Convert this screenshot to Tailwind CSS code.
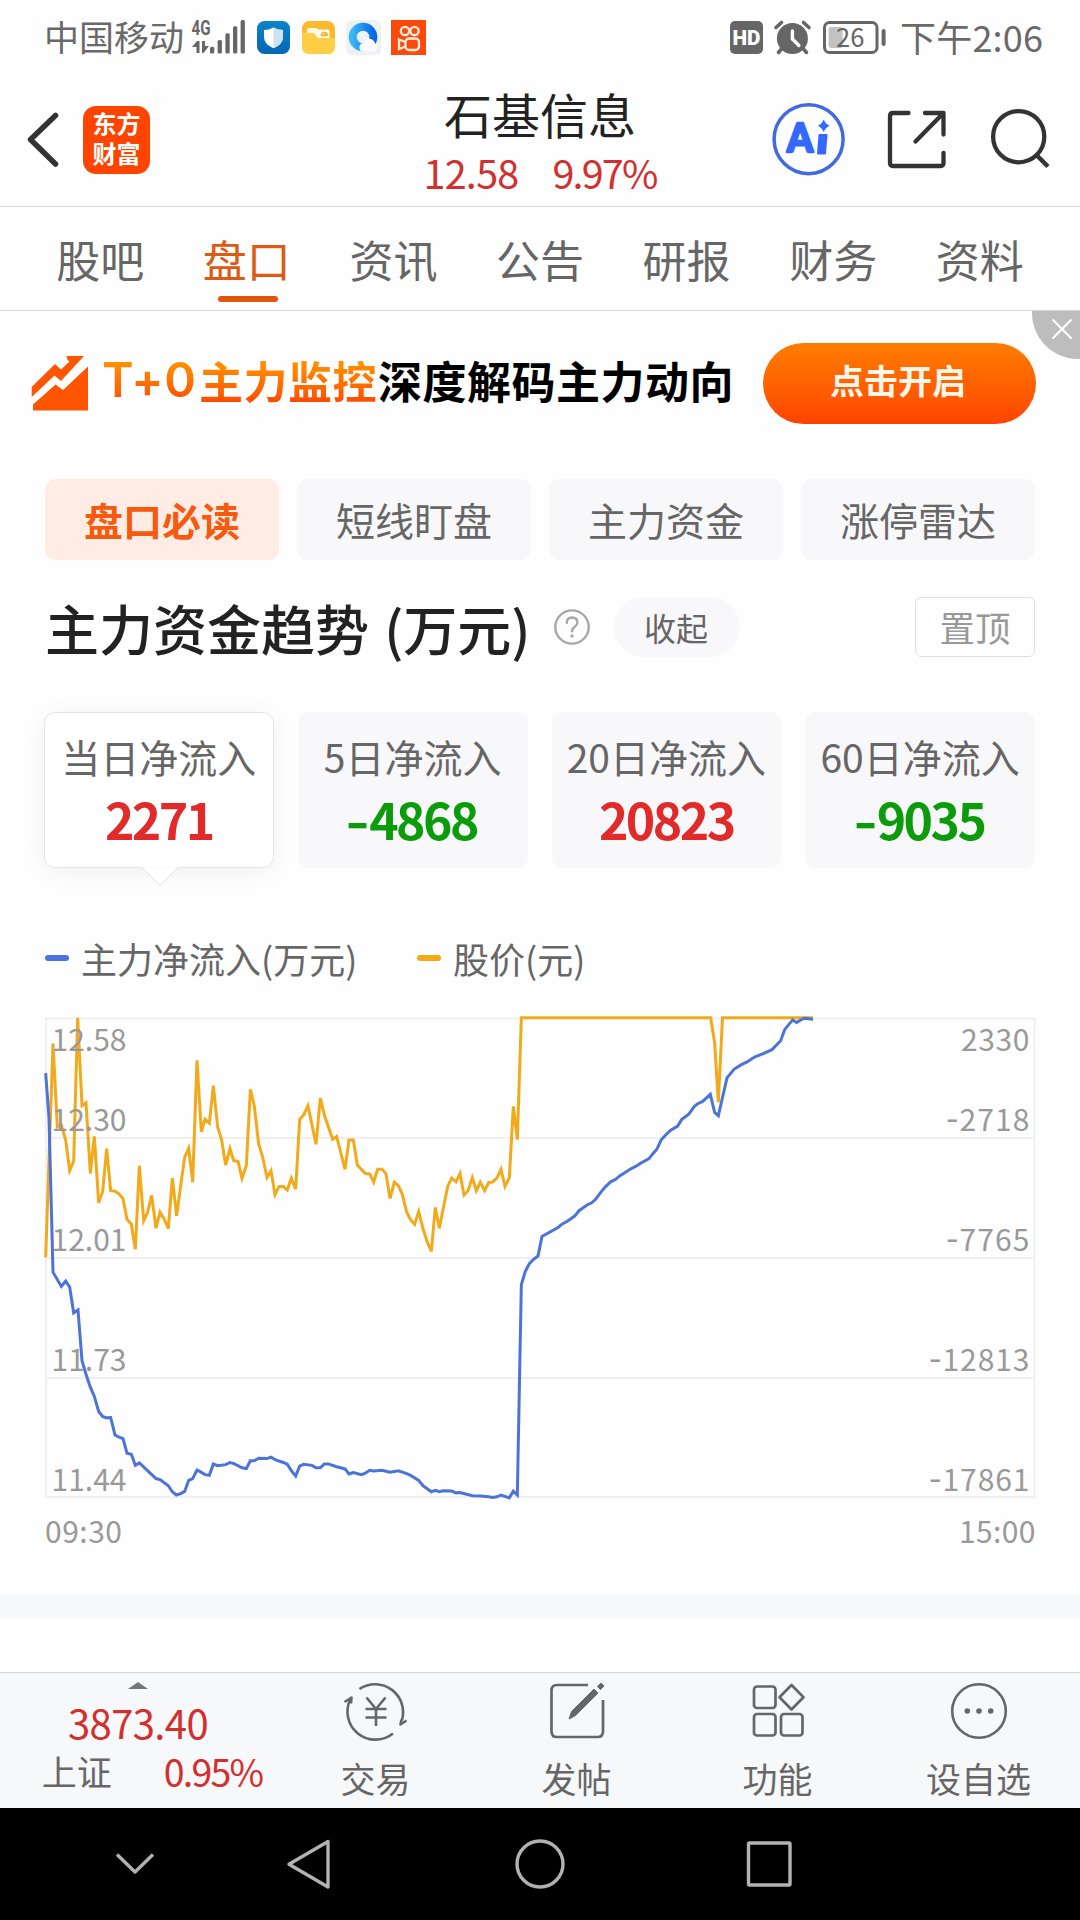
<!DOCTYPE html>
<html lang="zh-CN">
<head>
<meta charset="utf-8">
<title>石基信息 盘口</title>
<script src="https://cdn.jsdelivr.net/npm/@tailwindcss/browser@4"></script>
</head>
<body class="w-[1080px] h-[1920px] overflow-hidden bg-[#fefefe] font-['Noto_Sans_CJK_SC',sans-serif] text-[#666] flex flex-col leading-none whitespace-nowrap">

<!-- status bar -->
<div class="h-[74px] shrink-0 flex items-center pl-[44px] pr-[36px] text-[#696969]">
  <span class="text-[35px] leading-[68px] mb-[2px] w-[148px]">中国移动</span>
  <svg class="w-[53px] h-[36px] overflow-visible" viewBox="192 18 53 36" fill="#666">
    <text x="191.5" y="34" font-family="Roboto" font-weight="700" font-size="20" textLength="19" lengthAdjust="spacingAndGlyphs">4G</text>
    <path d="M192 46l5-6h2.500V52h-3v-6zM202 40h3v5h4l-5.500 7H202z"/>
    <rect x="210" y="45.700" width="4.300" height="6.800" rx="1.500"/><rect x="217.600" y="39" width="4.300" height="13.500" rx="1.500"/><rect x="225.400" y="32.300" width="4.300" height="20.200" rx="1.500"/><rect x="233" y="25.300" width="4.300" height="27.200" rx="1.500"/><rect x="240.600" y="19" width="4.300" height="33.500" rx="1.500"/>
  </svg>
  <svg class="w-[33px] h-[33px] ml-[12px]" viewBox="0 0 33 33">
    <defs><linearGradient id="sh" x2="0" y2="1"><stop stop-color="#0a84c8"/><stop offset="1" stop-color="#0567b4"/></linearGradient></defs>
    <rect width="33" height="33" rx="7.500" fill="url(#sh)"/>
    <path d="M16.500 6.500q4.500 2.500 9.500 2.500v8q-1 7-9.500 10.200Q8 24 7 17V9q5 0 9.500-2.500z" fill="#fff"/><path d="M16.500 6.500q4.500 2.500 9.500 2.500v8q-1 7-9.500 10.200z" fill="#cfe2f1"/>
  </svg>
  <svg class="w-[33px] h-[33px] ml-[12px]" viewBox="0 0 33 33">
    <rect width="33" height="33" rx="7.500" fill="#fdb92c"/>
    <path d="M5 14V9q0-2 2-2h7l2 1.500h9.500q2 0 2 2V17H5z" fill="#fffbe9"/>
    <path d="M0 12h11q2 0 3 2.500t3 2.500h16v9q0 7-7.500 7h-18Q0 33 0 26z" fill="#fecf45"/>
    <path d="M19.500 14.500a3 3 0 0 1 6 0zM22.500 14l1.500-2" fill="none" stroke="#f3b32c" stroke-width="1.400"/>
  </svg>
  <svg class="w-[35px] h-[35px] ml-[11px]" viewBox="0 0 35 35">
    <defs><linearGradient id="qb" x2="1" y2="0"><stop stop-color="#39b6f4"/><stop offset="1" stop-color="#0a68e8"/></linearGradient></defs>
    <rect width="35" height="35" rx="6" fill="#eef1f6"/>
    <circle cx="17" cy="17" r="10.300" fill="none" stroke="url(#qb)" stroke-width="8"/>
    <path d="M16 31.500a4.500 4.500 0 0 1 1-8.500 6 6 0 0 1 8-4 6 6 0 0 1 4 4.500 4.300 4.300 0 0 1-1 8z" fill="#fbfcfe"/>
  </svg>
  <svg class="w-[35px] h-[35px] ml-[10px]" viewBox="0 0 35 35" fill="none" stroke="#ffeede" stroke-width="2.300">
    <rect width="35" height="35" fill="#fd4a0c" stroke="none"/>
    <circle cx="14" cy="11" r="4.200"/><circle cx="23.500" cy="11" r="4.200"/>
    <rect x="14.500" y="18.500" width="13.500" height="11.500" rx="3.500"/><path d="M14.500 22L8 19.500v9.500l6.500-2.500"/>
  </svg>
  <div class="ml-auto flex items-center">
    <svg class="w-[156px] h-[36px] overflow-visible" viewBox="730 18 156 36">
      <rect x="730" y="20" width="33" height="33" rx="5" fill="#666"/>
      <text x="732.500" y="44" font-family="Roboto" font-weight="900" font-size="20.500" fill="#fff" textLength="28" lengthAdjust="spacingAndGlyphs">HD</text>
      <circle cx="792.400" cy="37.500" r="15.500" fill="#666"/>
      <path d="M776 26.500l5.500-5M809 26.500l-5.500-5M781.500 48l-3 3.500M803.500 48l3 3.500" stroke="#666" stroke-width="3.600" stroke-linecap="round"/>
      <path d="M792.400 30v8l6.500 6.500" fill="none" stroke="#fff" stroke-width="3.400" stroke-linecap="round"/>
      <rect x="824.500" y="21.500" width="52.500" height="30" rx="5" fill="none" stroke="#666" stroke-width="3"/>
      <rect x="828.600" y="26" width="14" height="21" rx="2.500" fill="#c2c2c2"/>
      <rect x="881.600" y="28" width="4" height="17" rx="2" fill="#666"/>
      <text x="836" y="46" font-size="25.500" fill="#666">26</text>
    </svg>
    <span class="text-[36px] leading-[68px] mb-[3px] ml-[14px] w-[144px] tracking-[0.200px]">下午2:06</span>
  </div>
</div>

<!-- title bar -->
<header class="h-[133px] shrink-0 border-b border-[#d6d6d6] flex items-start relative">
  <svg class="w-[36px] h-[60px] ml-[25px] mt-[36px]" viewBox="25 110 36 60" fill="none" stroke="#333" stroke-width="5.500" stroke-linecap="round" stroke-linejoin="round"><path d="M55.500 115.500L30.500 139.500l25 24.500"/></svg>
  <div class="w-[67px] h-[68px] ml-[22px] mt-[32px] rounded-[13px] bg-[#ff4400] text-white text-[24px] font-bold text-center leading-[29.500px] pt-[2px]">东方<br>财富</div>
  <div class="absolute left-[340px] w-[400px] top-0 flex flex-col items-center">
    <h1 class="text-[48px] leading-[58px] mt-[10px] text-[#222] font-normal">石基信息</h1>
    <div class="flex text-[#d22f2f] text-[39.500px] leading-[50px] mt-[5px]"><span class="w-[129px] tracking-[-0.700px]">12.58</span><span class="tracking-[-1.800px]">9.97%</span></div>
  </div>
  <svg class="w-[290px] h-[80px] ml-auto mr-[20px] mt-[26px]" viewBox="770 100 290 80" fill="none" stroke="#333" stroke-width="4.300" stroke-linecap="round" stroke-linejoin="round">
    <circle cx="808.600" cy="139.200" r="34.500" stroke="#4169e1" stroke-width="3.500"/>
    <text x="787" y="152" font-family="Lato" font-weight="900" font-size="40" fill="#3568ff" stroke="#3568ff" stroke-width="2.500" textLength="26" lengthAdjust="spacingAndGlyphs">A</text>
    <path d="M819.500 135h7l-1.500 18.500h-7z" fill="#3568ff" stroke="#3568ff" stroke-width="2"/>
    <path d="M823.700 119.500q1.800 4.400 6 6.200-4.200 1.800-6 6.200-1.800-4.400-6-6.200 4.200-1.800 6-6.200z" fill="#3568ff" stroke="none"/>
    <path d="M908.500 113H893q-3 0-3 3v47q0 3 3 3h47.500q3 0 3-3v-10M925 113h18.500v21.500M915.500 141.500L942.500 114"/>
    <circle cx="1018.700" cy="136.700" r="25.600"/><path d="M1037.500 156l10.500 10.500" stroke-linecap="butt" stroke-width="4.500"/>
  </svg>
</header>

<!-- tabs -->
<nav class="h-[104px] shrink-0 border-b border-[#d6d6d6] px-[27px] flex text-[44px] leading-[104px] text-center">
  <span class="flex-1">股吧</span>
  <span class="flex-1 relative text-[#dd5a14]">盘口<i class="absolute left-[44px] top-[89px] w-[60px] h-[6px] rounded-full bg-[#e3560e]"></i></span>
  <span class="flex-1">资讯</span><span class="flex-1">公告</span><span class="flex-1">研报</span><span class="flex-1">财务</span><span class="flex-1">资料</span>
</nav>

<!-- promotion -->
<section class="h-[168px] shrink-0 flex items-start relative">
  <svg class="w-[58px] h-[56px] ml-[31px] mt-[44px]" viewBox="31 355 58 56" fill="#ff5500"><path d="M31.700 387L55 364l6 5.500 8.500-8q-2.500-1-3-5.500H84l-23 25-6.500-5.500-22.800 21.500zM33 404.500L55.500 384.500l7.500 5.500L88 366.500v44H33z"/></svg>
  <div class="ml-[13px] mt-[37px] text-[44px] leading-[64px] font-bold tracking-[0.500px] flex"><span class="bg-linear-to-b from-[#ff9300] from-20% to-[#ff4a00] to-85% bg-clip-text text-transparent font-['Inter'] font-semibold text-[48px] tracking-[0.500px] w-[97px]">T+0</span><span class="bg-linear-to-b from-[#ff9300] from-20% to-[#ff4a00] to-85% bg-clip-text text-transparent">主力监控</span><span class="text-black ml-px">深度解码主力动向</span></div>
  <button class="absolute left-[763px] top-[32px] w-[273px] h-[81px] rounded-full bg-linear-to-b from-[#ff7c00] to-[#ff4200] text-[#fff6ea] text-[34px] font-bold leading-[72px] pb-[7px] pr-[3px]">点击开启</button>
  <div class="absolute right-0 top-0 w-[48px] h-[48px] rounded-bl-[46px] bg-[#bdbdbd]">
    <svg class="w-[20px] h-[20px] ml-[20px] mt-[8px]" viewBox="0 0 20 20" stroke="#fff" stroke-width="2.200"><path d="M0.500 0.500l19 19M19.500 0.500l-19 19"/></svg>
  </div>
</section>

<!-- chips -->
<div class="h-[81px] shrink-0 mx-[45px] grid grid-cols-4 gap-[18px] text-[39px] leading-[81px] text-center">
  <span class="rounded-[11px] bg-[#ffede5] text-[#f65a0f] font-bold">盘口必读</span>
  <span class="rounded-[11px] bg-[#f8f8fa]">短线盯盘</span>
  <span class="rounded-[11px] bg-[#f8f8fa]">主力资金</span>
  <span class="rounded-[11px] bg-[#f8f8fa]">涨停雷达</span>
</div>

<!-- section heading -->
<div class="h-[60px] shrink-0 mt-[37px] mx-[45px] flex items-center">
  <h2 class="text-[54px] leading-[60px] pt-[2px] font-medium text-[#222] w-[509px] [word-spacing:3px]">主力资金趋势 (万元)</h2>
  <svg class="w-[36px] h-[36px] shrink-0" viewBox="0 0 36 36" fill="none" stroke="#a6a6a6" stroke-width="2.300"><circle cx="18" cy="18" r="16.700"/><path d="M12.800 14q0-5.500 5.300-5.500t5.300 5q0 2.500-2.700 4.300T18 22.500" stroke-linecap="round"/><circle cx="18" cy="27" r="1" fill="#a6a6a6" stroke-width="1.500"/></svg>
  <span class="ml-[24px] w-[126px] h-[60px] rounded-full bg-[#f8f8fa] text-[32px] leading-[60px] pr-[2px] text-center">收起</span>
  <span class="ml-auto w-[120px] h-[60px] rounded-[6px] border border-[#e0e0e0] text-[#999] text-[35.500px] leading-[58px] text-center">置顶</span>
</div>

<!-- inflow cards -->
<div class="h-[156px] shrink-0 mt-[55px] ml-[44px] mr-[45px] grid grid-cols-4 gap-6 text-center text-[39px]">
  <div class="relative rounded-[11px] bg-white border border-[#e6e6e6] shadow-[0_4px_26px_rgba(0,0,0,0.06)]">
    <div class="leading-[48px] mt-[19px]">当日净流入</div>
    <div class="text-[50px] leading-[60px] mt-[8px] font-bold tracking-[-2.500px] text-[#e12a2a]">2271</div>
    <svg class="absolute left-[96px] top-[153px] w-[38px] h-[20px]" viewBox="0 0 38 20"><path d="M1 1.500L19 19.500 37 1.500" fill="#fff" stroke="#e2e2e2"/><path d="M1 0h36v1.500H1z" fill="#fff"/></svg>
  </div>
  <div class="rounded-[11px] bg-[#f8f8fa]">
    <div class="leading-[48px] mt-[20px]">5日净流入</div>
    <div class="text-[50px] leading-[60px] mt-[8px] font-bold tracking-[-2.500px] text-[#0b9b0b]"><span class="inline-block scale-x-130 mr-[5px]">-</span>4868</div>
  </div>
  <div class="rounded-[11px] bg-[#f8f8fa]">
    <div class="leading-[48px] mt-[20px]">20日净流入</div>
    <div class="text-[50px] leading-[60px] mt-[8px] font-bold tracking-[-2.500px] text-[#e12a2a]">20823</div>
  </div>
  <div class="rounded-[11px] bg-[#f8f8fa]">
    <div class="leading-[48px] mt-[20px]">60日净流入</div>
    <div class="text-[50px] leading-[60px] mt-[8px] font-bold tracking-[-2.500px] text-[#0b9b0b]"><span class="inline-block scale-x-130 mr-[5px]">-</span>9035</div>
  </div>
</div>

<!-- legend -->
<div class="h-[50px] shrink-0 mt-[65px] mx-[45px] flex items-center text-[36px] leading-[50px]">
  <i class="w-[24px] h-[6px] rounded-full bg-[#4a72e0]"></i><span class="ml-[12px] w-[336px]">主力净流入(万元)</span>
  <i class="w-[24px] h-[6px] rounded-full bg-[#f5aa17]"></i><span class="ml-[12px]">股价(元)</span>
</div>

<!-- trend chart -->
<div class="h-[567px] shrink-0 mt-[27px]">
  <svg class="w-[1080px] h-[567px]" viewBox="0 1010 1080 567">
    <path d="M46 1018.500H1034.500V1497H46zM46 1138H1034M46 1258H1034M46 1378H1034" fill="none" stroke="#f0f0f0" stroke-width="2"/>
    <g transform="translate(30 1000) scale(.33333 .35714)" fill="none" stroke-width="3">
      <polyline vector-effect="non-scaling-stroke" stroke="#f2aa1c" points="47,721 58,420 69,122 82,355 94,350 107,392 119,478 131,452 143,50 156,296 168,288 181,486 193,382 206,568 218,536 230,416 242,534 254,535 267,543 279,556 291,614 304,628 316,698 328,464 341,618 353,594 365,547 378,639 390,594 403,614 415,640 427,499 440,604 452,520 464,440 476,415 488,510 501,169 514,369 525,334 538,345 550,240 563,356 575,392 587,462 600,416 611,450 624,452 636,500 649,464 661,250 673,297 686,404 698,440 711,497 723,478 735,545 747,522 760,522 772,532 784,499 797,530 809,334 821,322 834,296 846,350 858,404 871,275 883,322 908,390 920,382 945,474 957,392 970,392 982,462 1006,486 1019,487 1031,510 1043,474 1056,474 1068,486 1080,556 1093,510 1105,520 1117,544 1130,594 1142,616 1154,628 1166,592 1179,640 1191,676 1204,704 1216,581 1228,639 1253,522 1265,499 1278,509 1290,486 1302,546 1314,534 1327,497 1339,534 1351,510 1364,534 1376,511 1388,510 1401,498 1413,474 1425,522 1438,498 1450,298 1462,391 1474,50 2042,50 2054,120 2065,286 2077.500,50 2349,50"/>
      <polyline vector-effect="non-scaling-stroke" stroke="#4c74d8" points="47,205 57,330 69,762 94,802 107,787 119,804 131,876 144,868 156,1010 168,1048 181,1084 193,1110 206,1152 218,1166 229,1170 242,1169 255,1218 267,1224 279,1228 291,1269 304,1272 316,1303 328,1296 378,1340 390,1343 415,1360 427,1377 439,1386 452,1382 464,1376 476,1345 488,1340 501,1316 513,1322 525,1329 538,1331 550,1299 563,1304 587,1301 600,1295 612,1298 636,1310 649,1312 661,1290 673,1290 686,1283 711,1284 723,1280 735,1287 760,1295 772,1300 784,1318 797,1333 809,1305 821,1300 846,1303 858,1310 871,1310 883,1299 895,1299 920,1307 945,1313 957,1327 970,1323 994,1329 1006,1325 1019,1317 1031,1319 1056,1317 1080,1322 1105,1318 1130,1326 1142,1331 1166,1345 1179,1360 1204,1377 1216,1373 1228,1377 1240,1374 1265,1375 1278,1380 1290,1379 1327,1388 1351,1389 1376,1391 1388,1393 1401,1391 1413,1386 1438,1394 1450,1375 1462,1386 1468,1090 1474,797 1486,760 1498,738 1511,726 1524,717 1536,662 1584,637 1597,627 1613,619 1634,605 1647,590 1671,574 1685,568 1697,558 1711,540 1726,523 1742,509 1757,502 1770,492 1804,472 1819,465 1832,457 1857,444 1868,431 1881,417 1894,391 1907,378 1920,366 1943,353 1955,335 1977,319 1992,299 2002,291 2018,284 2041,264 2054,315 2065,324 2091,218 2112,194 2134,181 2150,174 2175,159 2198,151 2226,139 2252,114 2264,83 2276,69 2288,56 2300,63 2312,56 2323,51 2349,54"/>
    </g>
    <g font-size="30" fill="#999">
      <text x="51.500" y="1051">12.58</text><text x="51.500" y="1131">12.30</text><text x="51.500" y="1251">12.01</text><text x="51.500" y="1371">11.73</text><text x="51.500" y="1491">11.44</text>
      <text x="961" y="1051" textLength="68.500">2330</text>
      <text x="946" y="1131" textLength="83.500"><tspan font-size="36">-</tspan>2718</text>
      <text x="946" y="1251" textLength="83.500"><tspan font-size="36">-</tspan>7765</text>
      <text x="929" y="1371" textLength="100.500"><tspan font-size="36">-</tspan>12813</text>
      <text x="929" y="1491" textLength="100.500"><tspan font-size="36">-</tspan>17861</text>
      <text x="959" y="1543" textLength="76.500">15:00</text>
      <text x="45" y="1543" textLength="77">09:30</text>
    </g>
  </svg>
</div>
<div class="h-[24px] shrink-0 mt-[17px] bg-[#f7f8fa]"></div>

<!-- toolbar -->
<footer class="h-[136px] shrink-0 mt-[54px] border-t border-[#d2d5d9] bg-[#f7f8fa] flex text-[35px]">
  <div class="w-[275px] flex flex-col items-center">
    <svg class="w-[20px] h-[7px] mt-[9px]" viewBox="0 0 20 7"><path d="M10 0l10 7H0z" fill="#777"/></svg>
    <div class="text-[40px] leading-[48px] mt-[9px] ml-[1px] text-[#d22f2f] tracking-[-0.600px]">3873.40</div>
    <div class="flex items-center leading-[48px] mt-[1px]"><span class="w-[122px] ml-[29px]">上证</span><span class="text-[37.500px] text-[#d22f2f] tracking-[-1.800px]">0.95%</span></div>
  </div>
  <div class="w-[201px] flex flex-col items-center">
    <svg class="w-[66px] h-[60px] mt-[8px]" viewBox="343 1682 66 60" fill="none" stroke="#666" stroke-width="2.600" stroke-linejoin="round">
      <path d="M359.500 1690a28 28 0 0 1 42.500 31M401.500 1720.500l-1 5 6-4M393 1734.500a28 28 0 0 1-42.500-34.500M344.500 1703l7-4.500-.5 6"/>
      <path d="M366.500 1698.500l9.500 11.500 9.500-11.500M376 1710v17M365.500 1710h21M365.500 1718.500h21"/>
    </svg>
    <span class="leading-[44px] mt-[15px]">交易</span>
  </div>
  <div class="w-[201px] flex flex-col items-center">
    <svg class="w-[60px] h-[60px] mt-[8px]" viewBox="547 1682 60 60" fill="none" stroke="#666" stroke-width="2.700" stroke-linejoin="round">
      <path d="M588 1686h-31q-5.500 0-5.500 5.500v41q0 5.500 5.500 5.500h40.500q5.500 0 5.500-5.500V1701"/>
      <path d="M569 1720l2.500-7.500 22.500-22.500 4 4-22.500 22.500zM597.500 1687.500l3.500-3.500 3 3-3.500 3.500z" fill="#666" stroke-width="1"/>
    </svg>
    <span class="leading-[44px] mt-[15px]">发帖</span>
  </div>
  <div class="w-[201px] flex flex-col items-center">
    <svg class="w-[60px] h-[60px] mt-[8px]" viewBox="748 1682 60 60" fill="none" stroke="#666" stroke-width="2.700" stroke-linejoin="round">
      <rect x="754" y="1687.500" width="21.500" height="21.500" rx="3"/><rect x="754" y="1715" width="21.500" height="21.500" rx="3"/><rect x="781" y="1715" width="21.500" height="21.500" rx="3"/>
      <path d="M791.500 1686l12 12.300-12 12.200-12-12.200z"/>
    </svg>
    <span class="leading-[44px] mt-[15px]">功能</span>
  </div>
  <div class="w-[201px] flex flex-col items-center">
    <svg class="w-[60px] h-[60px] mt-[8px]" viewBox="949 1682 60 60"><circle cx="979" cy="1712" r="26.800" fill="none" stroke="#666" stroke-width="2.600"/><g fill="#666"><circle cx="967.300" cy="1712" r="2.800"/><circle cx="979" cy="1712" r="2.800"/><circle cx="990.700" cy="1712" r="2.800"/></g></svg>
    <span class="leading-[44px] mt-[15px]">设自选</span>
  </div>
</footer>

<!-- system navigation -->
<div class="h-[112px] shrink-0 bg-black">
  <svg class="w-[1080px] h-[112px]" viewBox="0 1808 1080 112" fill="none" stroke="#b2b2b2" stroke-width="3.400" stroke-linejoin="round">
    <path d="M117 1854.500l18 17.500 18-17.500"/><path d="M328 1841.500v45.500L289 1864.200z"/><circle cx="540" cy="1864" r="23"/><rect x="748.500" y="1843" width="41.500" height="42" rx="1"/>
  </svg>
</div>
</body>
</html>
